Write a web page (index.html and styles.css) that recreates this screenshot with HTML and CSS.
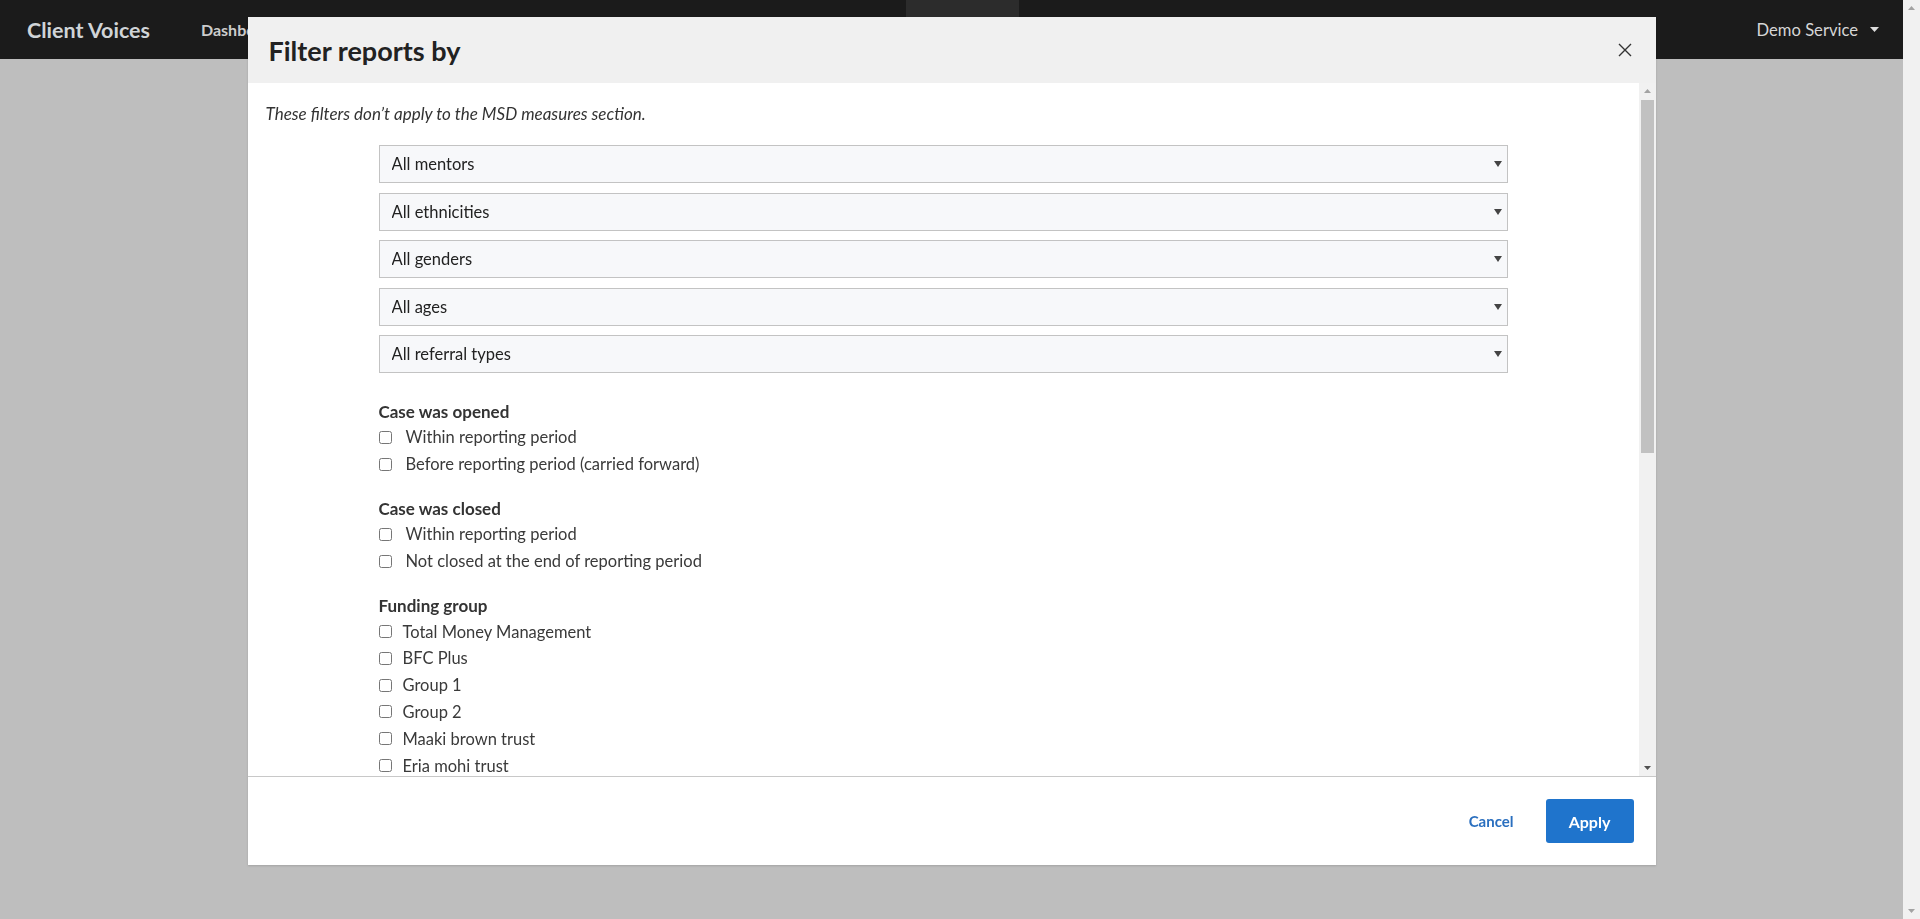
FILE: index.html
```html
<!DOCTYPE html>
<html lang="en">
<head>
<meta charset="utf-8">
<title>Client Voices</title>
<link rel="stylesheet" href="styles.css">
</head>
<body>
<div class="app">
  <div class="page">
    <header class="navbar">
      <div class="brand">Client Voices</div>
      <nav class="nav">
        <a class="nav-link">Dashboard</a>
        <a class="nav-link">Clients</a>
        <a class="nav-link">Sessions</a>
        <a class="nav-link">Surveys</a>
        <a class="nav-link">Outcomes</a>
        <a class="nav-link">Resources</a>
        <a class="nav-link active">Reports</a>
      </nav>
      <div class="user">Demo Service
        <svg class="user-caret" width="9" height="5" viewBox="0 0 9 5"><polygon points="0,0 9,0 4.5,5" fill="#dcdcdc"/></svg>
      </div>
    </header>
  </div>
  <div class="page-scrollbar">
    <svg width="17" height="17" viewBox="0 0 17 17"><polygon points="5,10 12,10 8.5,6" fill="#a3a3a3"/></svg>
    <svg width="17" height="17" viewBox="0 0 17 17"><polygon points="5,7 12,7 8.5,11" fill="#a3a3a3"/></svg>
  </div>
</div>

<div class="modal" role="dialog">
  <div class="modal-header">
    <h2 class="modal-title">Filter reports by</h2>
    <button class="close" aria-label="Close">
      <svg width="14" height="14" viewBox="0 0 14 14"><path d="M1 1 L13 13 M13 1 L1 13" stroke="#333" stroke-width="1.4" fill="none"/></svg>
    </button>
  </div>
  <div class="modal-body">
    <div class="body-content">
      <p class="note">These filters don’t apply to the MSD measures section.</p>
      <div class="filters">
        <div class="selects">
          <div class="select-wrap"><select class="select"><option>All mentors</option></select><svg class="select-caret" width="8" height="6" viewBox="0 0 8 6"><polygon points="0,0 8,0 4,6" fill="#444"/></svg></div>
          <div class="select-wrap"><select class="select"><option>All ethnicities</option></select><svg class="select-caret" width="8" height="6" viewBox="0 0 8 6"><polygon points="0,0 8,0 4,6" fill="#444"/></svg></div>
          <div class="select-wrap"><select class="select"><option>All genders</option></select><svg class="select-caret" width="8" height="6" viewBox="0 0 8 6"><polygon points="0,0 8,0 4,6" fill="#444"/></svg></div>
          <div class="select-wrap"><select class="select"><option>All ages</option></select><svg class="select-caret" width="8" height="6" viewBox="0 0 8 6"><polygon points="0,0 8,0 4,6" fill="#444"/></svg></div>
          <div class="select-wrap"><select class="select"><option>All referral types</option></select><svg class="select-caret" width="8" height="6" viewBox="0 0 8 6"><polygon points="0,0 8,0 4,6" fill="#444"/></svg></div>
        </div>

        <div class="group">
          <div class="group-title">Case was opened</div>
          <label class="check wide"><input type="checkbox"><span>Within reporting period</span></label>
          <label class="check wide"><input type="checkbox"><span>Before reporting period (carried forward)</span></label>
        </div>

        <div class="group">
          <div class="group-title">Case was closed</div>
          <label class="check wide"><input type="checkbox"><span>Within reporting period</span></label>
          <label class="check wide"><input type="checkbox"><span>Not closed at the end of reporting period</span></label>
        </div>

        <div class="group">
          <div class="group-title">Funding group</div>
          <label class="check"><input type="checkbox"><span>Total Money Management</span></label>
          <label class="check"><input type="checkbox"><span>BFC Plus</span></label>
          <label class="check"><input type="checkbox"><span>Group 1</span></label>
          <label class="check"><input type="checkbox"><span>Group 2</span></label>
          <label class="check"><input type="checkbox"><span>Maaki brown trust</span></label>
          <label class="check"><input type="checkbox"><span>Eria mohi trust</span></label>
        </div>
      </div>
    </div>
    <div class="scrollbar">
      <svg class="sb-btn" width="17" height="17" viewBox="0 0 17 17"><polygon points="5,10 12,10 8.5,6" fill="#a3a3a3"/></svg>
      <div class="sb-track"><div class="sb-thumb"></div></div>
      <svg class="sb-btn" width="17" height="17" viewBox="0 0 17 17"><polygon points="5,7 12,7 8.5,11" fill="#505050"/></svg>
    </div>
  </div>
  <div class="modal-footer">
    <button class="btn-link">Cancel</button>
    <button class="btn-primary">Apply</button>
  </div>
</div>
</body>
</html>
```
FILE: styles.css
```css
body {
  margin: 0;
  background: #bebebe;
  font-family: Lato, "Noto Sans", sans-serif;
  color: #333;
  overflow: hidden;
}

.app {
  display: flex;
  height: 100vh;
}

.page {
  flex: 1;
  min-width: 0;
}

.page-scrollbar {
  flex: none;
  width: 17px;
  background: #f1f1f1;
  display: flex;
  flex-direction: column;
  justify-content: space-between;
}

/* Navbar */
.navbar {
  display: flex;
  align-items: stretch;
  height: 59px;
  background: #1b1b1b;
  padding-left: 27px;
}

.brand {
  display: flex;
  align-items: center;
  font-size: 21.5px;
  font-weight: 700;
  color: #d0d4d7;
  margin-right: 22.2px;
}

.nav {
  display: flex;
}

.nav-link {
  display: flex;
  align-items: center;
  padding: 0 28.76px;
  font-size: 16px;
  font-weight: 700;
  color: #cccccc;
}

.nav-link.active {
  background: #2c2c2c;
}

.user {
  margin-left: auto;
  display: flex;
  align-items: center;
  gap: 12px;
  padding-right: 24px;
  font-size: 16.6px;
  color: #d6d6d6;
}

/* Modal */
.modal {
  position: fixed;
  top: 17px;
  left: 0;
  right: 17px;
  margin: 0 auto;
  width: 1408px;
  height: 848px;
  background: #fff;
  display: flex;
  flex-direction: column;
  box-shadow: 0 1px 2px rgba(0, 0, 0, 0.15);
}

.modal-header {
  flex: none;
  height: 66px;
  background: #f0f0f0;
  display: flex;
  align-items: center;
  justify-content: space-between;
  padding: 0 24px 0 21px;
}

.modal-title {
  margin: 0;
  font-size: 27px;
  font-weight: 700;
  color: #222;
}

.close {
  border: 0;
  background: none;
  padding: 0;
  width: 14px;
  height: 14px;
  display: flex;
}

.modal-body {
  flex: 1;
  min-height: 0;
  display: flex;
}

.body-content {
  flex: 1;
  min-width: 0;
  overflow: hidden;
  padding: 19px 18px 0;
}

.scrollbar {
  flex: none;
  width: 17px;
  background: #f1f1f1;
  display: flex;
  flex-direction: column;
}

.sb-btn {
  flex: none;
  display: block;
}

.sb-track {
  flex: 1;
}

.sb-thumb {
  margin: 0 2px;
  height: 353px;
  background: #c1c1c1;
}

.note {
  margin: 0 0 19px;
  font-style: italic;
  font-size: 17px;
  line-height: 24px;
  color: #333;
}

.filters {
  width: 1129px;
  margin: 0 auto;
}

.selects {
  display: flex;
  flex-direction: column;
  gap: 9.5px;
  margin-bottom: 27px;
}

.select-wrap {
  position: relative;
}

.select {
  appearance: none;
  -webkit-appearance: none;
  display: block;
  width: 100%;
  height: 38px;
  border: 1px solid #c3c3c3;
  border-radius: 0;
  background: #f7f8fa;
  padding: 0 12px;
  font-family: inherit;
  font-size: 16.5px;
  color: #222;
}

.select-caret {
  position: absolute;
  right: 6px;
  top: 16px;
}

.group {
  margin-bottom: 19.5px;
}

.group-title {
  font-size: 17px;
  font-weight: 700;
  line-height: 24px;
  color: #333;
}

.check {
  display: flex;
  align-items: center;
  height: 26.8px;
  font-size: 16.5px;
  color: #3a3a3a;
}

.check input {
  margin: 0 11px 0 0;
  width: 13px;
  height: 13px;
}

.check.wide input {
  margin-right: 14px;
}

/* Footer */
.modal-footer {
  flex: none;
  height: 89px;
  box-sizing: border-box;
  border-top: 1px solid #c8c8c8;
  display: flex;
  align-items: center;
  justify-content: flex-end;
  gap: 16px;
  padding-right: 22px;
}

.btn-link {
  border: 0;
  background: none;
  padding: 0 16px;
  font-family: inherit;
  font-size: 15px;
  font-weight: 700;
  color: #2a6fbf;
}

.btn-primary {
  width: 88px;
  height: 44px;
  border: 0;
  border-radius: 3px;
  background: #1f74cc;
  font-family: inherit;
  font-size: 16px;
  font-weight: 700;
  color: #fff;
}
```
